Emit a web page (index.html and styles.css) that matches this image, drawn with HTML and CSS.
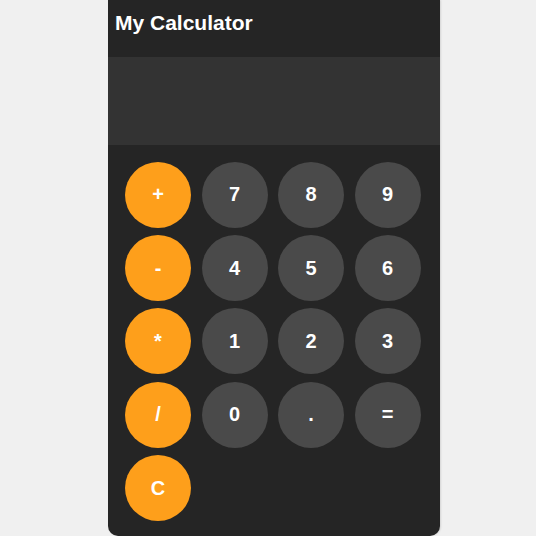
FILE: index.html
```html
<!DOCTYPE html>
<html>
<head>
<meta charset="utf-8">
<title>My Calculator</title>
<link rel="stylesheet" href="styles.css">
</head>
<body>
<div class="calculator">
  <header class="calc-header"><h1 class="calc-title">My Calculator</h1></header>
  <div class="display"></div>
  <div class="keys">
    <button class="key op">+</button>
    <button class="key">7</button>
    <button class="key">8</button>
    <button class="key">9</button>
    <button class="key op">-</button>
    <button class="key">4</button>
    <button class="key">5</button>
    <button class="key">6</button>
    <button class="key op">*</button>
    <button class="key">1</button>
    <button class="key">2</button>
    <button class="key">3</button>
    <button class="key op">/</button>
    <button class="key">0</button>
    <button class="key">.</button>
    <button class="key">=</button>
    <button class="key op">C</button>
  </div>
</div>
</body>
</html>
```
FILE: styles.css
```css
html, body {
  margin: 0;
  padding: 0;
  height: 100%;
}
body {
  background: #f0f0f0;
  font-family: "Liberation Sans", Arial, sans-serif;
  overflow: hidden;
}
.calculator {
  margin-left: 108px;
  width: 332px;
  height: 536px;
  background: #252525;
  border-radius: 0 0 10px 10px;
  box-shadow: 1px 0 2px rgba(0,0,0,0.12);
  display: flex;
  flex-direction: column;
}
.calc-header {
  height: 57px;
  box-sizing: border-box;
  padding: 11px 0 0 7px;
}
.calc-title {
  margin: 0;
  color: #ffffff;
  font-size: 21px;
  font-weight: bold;
  line-height: 24px;
}
.display {
  height: 88px;
  background: #333333;
}
.keys {
  display: grid;
  grid-template-columns: repeat(4, 66px);
  grid-auto-rows: 66px;
  column-gap: 10.5px;
  row-gap: 7.33px;
  padding: 16.7px 0 0 17px;
}
.key {
  width: 66px;
  height: 66px;
  border: none;
  border-radius: 50%;
  background: #4a4a4a;
  color: #ffffff;
  font-family: "Liberation Sans", Arial, sans-serif;
  font-size: 20px;
  font-weight: bold;
  padding: 0;
}
.key.op {
  background: #fe9f1b;
}
```
